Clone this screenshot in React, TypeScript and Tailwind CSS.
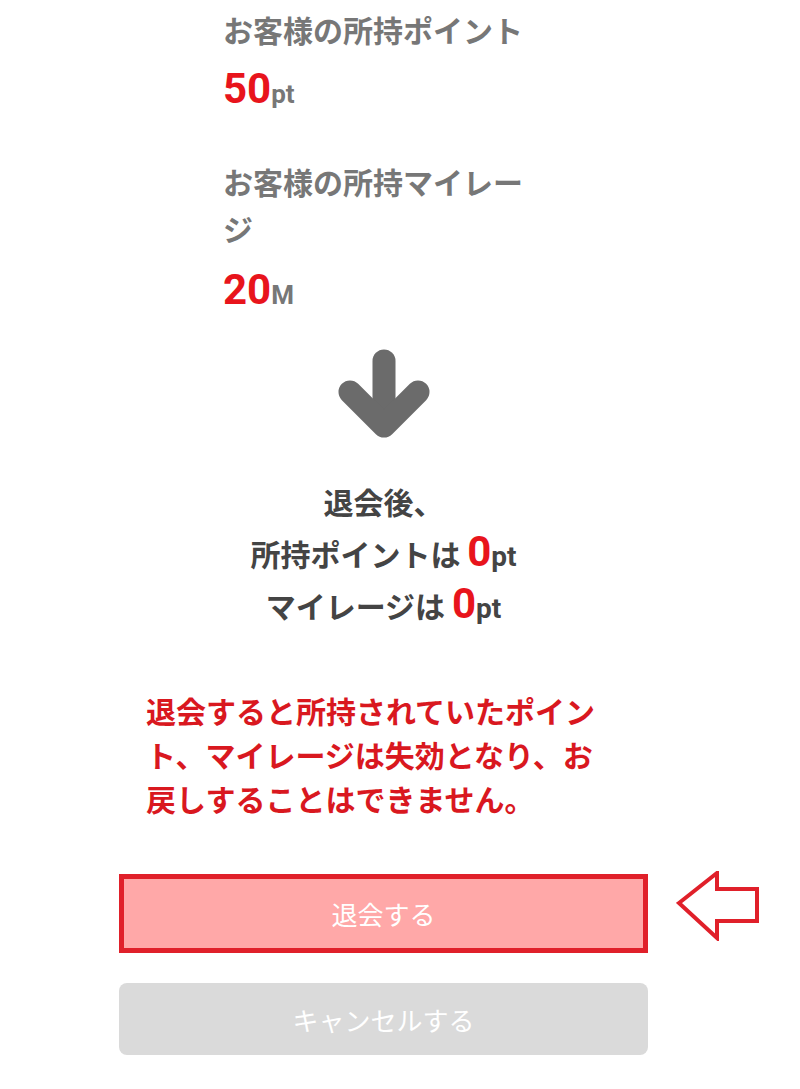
import React from "react";

function DownArrow() {
  return (
    <svg width="92" height="90" viewBox="0 0 92 90" className="mx-auto block">
      <g fill="none" stroke="#6b6b6b" strokeWidth="23" strokeLinecap="round" strokeLinejoin="round">
        <path d="M46 12 V70" />
        <path d="M12 43 L46 77 L80 43" />
      </g>
    </svg>
  );
}

function PointerArrow() {
  return (
    <svg width="84" height="70" viewBox="0 0 84 70" className="absolute left-[557px] top-[-3px]">
      <path
        d="M3 32 L41 2 L41 18 L81 18 L81 50 L41 50 L41 67 Z"
        fill="none"
        stroke="#e0202a"
        strokeWidth="4"
        strokeLinejoin="miter"
      />
    </svg>
  );
}

const roboto = { fontFamily: "Roboto, sans-serif" };

export default function App() {
  return (
    <div
      className="w-[800px] min-h-[1089px] bg-white overflow-hidden"
      style={{ fontFamily: '"Noto Sans CJK JP", "Noto Sans", sans-serif' }}
    >
      <div className="ml-[119px] w-[529px]">
        {/* current balances */}
        <div className="pl-[104px] pt-[5px]">
          <p className="w-[310px] text-[30px] leading-[48px] font-bold text-[#777777]">
            お客様の所持ポイント
          </p>
          <p className="mt-[10px] flex h-[50px] items-baseline pt-[5px] font-bold text-[#777777]">
            <span className="text-[42px] leading-none text-[#e8141c]" style={roboto}>50</span>
            <span className="text-[26px] leading-none" style={roboto}>pt</span>
          </p>
          <p className="mt-[45px] w-[305px] text-[30px] leading-[47px] font-bold text-[#777777]">
            お客様の所持マイレージ
          </p>
          <p className="mt-[12px] flex h-[50px] items-baseline pt-[5px] font-bold text-[#777777]">
            <span className="text-[42px] leading-none text-[#e8141c]" style={roboto}>20</span>
            <span className="text-[26px] leading-none" style={roboto}>M</span>
          </p>
        </div>

        <div className="mt-[35px]">
          <DownArrow />
        </div>

        {/* after withdrawal */}
        <div className="mt-[36px] text-center text-[30px] leading-[52px] font-bold text-[#444444]">
          <p className="h-[52px]">退会後、</p>
          <p className="h-[52px]">
            所持ポイントは{" "}
            <span className="text-[42px] leading-none text-[#e8141c]" style={roboto}>0</span>
            <span className="text-[28px] leading-none" style={roboto}>pt</span>
          </p>
          <p className="h-[52px]">
            マイレージは{" "}
            <span className="text-[42px] leading-none text-[#e8141c]" style={roboto}>0</span>
            <span className="text-[28px] leading-none" style={roboto}>pt</span>
          </p>
        </div>

        <p className="mt-[57px] ml-[27px] w-[458px] text-[30px] leading-[44px] font-bold text-[#d9181f]">
          退会すると所持されていたポイント、マイレージは失効となり、お戻しすることはできません。
        </p>

        {/* buttons */}
        <div className="relative mt-[54px]">
          <button className="flex h-[79px] w-[529px] items-center justify-center border-[5px] border-[#e0202a] bg-[#ffa8a8] text-[26px] text-white">
            退会する
          </button>
          <PointerArrow />
        </div>
        <button className="mt-[30px] flex h-[72px] w-[529px] items-center justify-center rounded-lg bg-[#dadada] text-[26px] text-white">
          キャンセルする
        </button>
      </div>
    </div>
  );
}
